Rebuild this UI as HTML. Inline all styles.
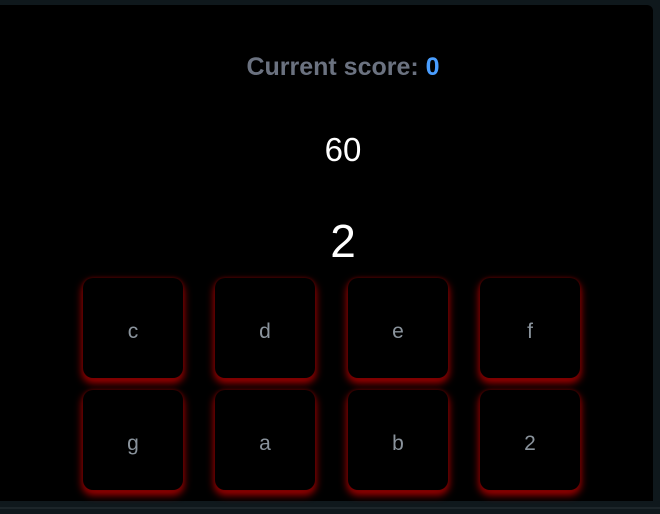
<!DOCTYPE html>
<html><head><style>
html,body{margin:0;padding:0;background:#000;width:660px;height:514px;overflow:hidden;font-family:"Liberation Sans",sans-serif}
.frame{position:absolute;left:0;top:0;width:660px;height:514px;background:#0f181c}
.inner{position:absolute;left:0;top:5px;width:653px;height:496px;background:#000;border-top-right-radius:6px}
.line{position:absolute;left:0;top:507px;width:660px;height:2px;background:#1c2529}
.score{position:absolute;top:53px;left:0;width:686px;text-align:center;font-size:25px;font-weight:bold;color:#6b7280}
.score span{color:#4a9eff}
.t{position:absolute;left:0;width:686px;text-align:center;color:#fff}
.tile{position:absolute;width:100px;height:100px;border-radius:10px;background:#000;box-sizing:border-box;padding-top:8px;
box-shadow:0 0 3px 0 #500,0 4px 8px 1px #a00;display:flex;align-items:center;justify-content:center;color:#8a939c;font-size:21px}
</style></head><body>
<div class="frame"></div><div class="inner"></div><div class="line"></div>
<div class="score">Current score: <span>0</span></div>
<div class="t" style="top:131px;font-size:33px">60</div>
<div class="t" style="top:214px;font-size:46px">2</div>
<div class="tile" style="left:83px;top:278px">c</div>
<div class="tile" style="left:215px;top:278px">d</div>
<div class="tile" style="left:348px;top:278px">e</div>
<div class="tile" style="left:480px;top:278px">f</div>
<div class="tile" style="left:83px;top:390px">g</div>
<div class="tile" style="left:215px;top:390px">a</div>
<div class="tile" style="left:348px;top:390px">b</div>
<div class="tile" style="left:480px;top:390px">2</div>
</body></html>
